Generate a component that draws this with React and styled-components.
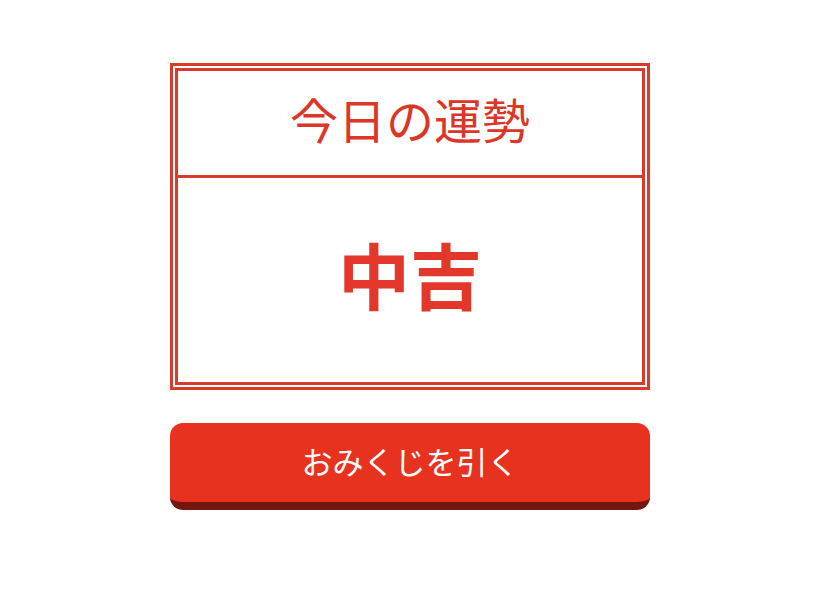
import React from "react";
import styled, { createGlobalStyle } from "styled-components";

const Global = createGlobalStyle`
  html, body { margin: 0; padding: 0; background: #ffffff; }
  body { font-family: "Noto Sans CJK JP", "Noto Sans", sans-serif; }
`;

const Page = styled.main`
  display: flex;
  justify-content: center;
  padding: 63px 0 40px 3px;
`;

const Column = styled.div`
  width: 480px;
  display: flex;
  flex-direction: column;
  gap: 33px;
`;

const Card = styled.section`
  box-sizing: border-box;
  height: 327px;
  border: 8px double #d83a2c;
  display: flex;
  flex-direction: column;
  background: #fff;
`;

const Header = styled.div`
  box-sizing: border-box;
  flex: 0 0 107px;
  display: flex;
  align-items: center;
  justify-content: center;
  border-bottom: 3px solid #d83a2c;
  color: #dc3628;
  font-size: 48px;
  font-weight: 400;
  line-height: 1;
  padding-bottom: 10px;
`;

const Result = styled.div`
  flex: 1 1 auto;
  display: flex;
  align-items: center;
  justify-content: center;
  color: #e2372a;
  font-size: 72px;
  font-weight: 700;
  line-height: 1;
  padding-bottom: 14px;
`;

const DrawButton = styled.button`
  box-sizing: border-box;
  flex: 0 0 87px;
  height: 87px;
  border: none;
  border-bottom: 8px solid #741610;
  border-radius: 13px;
  background: #e7321f;
  color: #ffffff;
  font-family: "Noto Sans CJK JP", "Noto Sans", sans-serif;
  font-size: 31px;
  font-weight: 400;
  line-height: 1;
  cursor: pointer;
  padding: 0 0 5px;
`;

export default function App() {
  return (
    <>
      <Global />
      <Page>
        <Column>
          <Card>
            <Header>今日の運勢</Header>
            <Result>中吉</Result>
          </Card>
          <DrawButton>おみくじを引く</DrawButton>
        </Column>
      </Page>
    </>
  );
}
